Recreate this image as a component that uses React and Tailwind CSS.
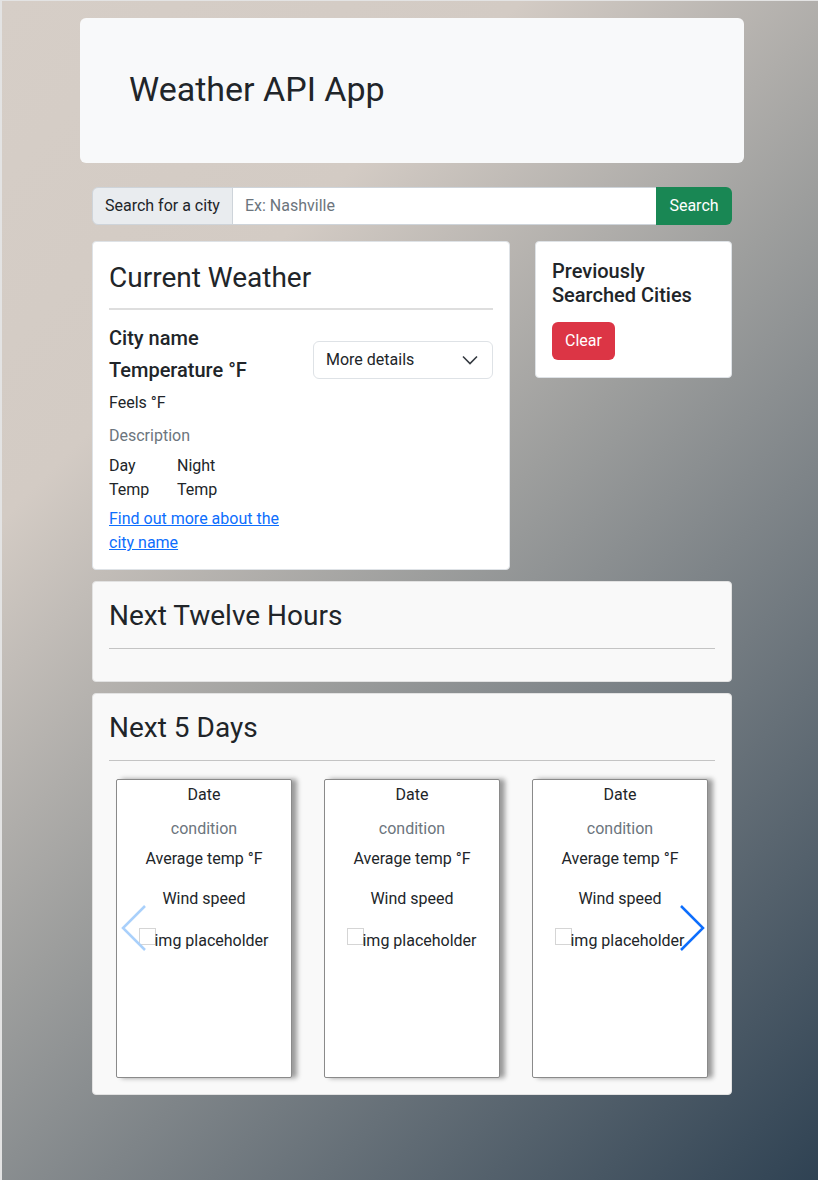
import React from "react";

// Weather dashboard: jumbotron, search bar, current weather, history, forecast carousel
const DayCard = () => (
  <div className="w-[176px] h-[299px] bg-white border border-[#8a8a8a] rounded-[2px] shadow-[5px_0_5px_#9a9a9a] flex flex-col items-center text-[16px] text-[#212529]">
    <p className="mt-[3px] leading-[24px]">Date</p>
    <p className="mt-[10px] leading-[24px] text-[#6c757d]">condition</p>
    <p className="mt-[6px] leading-[24px]">Average temp °F</p>
    <p className="mt-[16px] leading-[24px]">Wind speed</p>
    <p className="mt-[18px] leading-[24px] flex items-start">
      <span className="w-[17px] h-[17px] border border-[#d5d5d5] mt-[-1px] mr-[-2px]" />
      img placeholder
    </p>
  </div>
);

const Chevron = ({ dir, className }) => (
  <svg width="26" height="46" viewBox="0 0 26 46" className={className} fill="none" stroke="currentColor" strokeWidth="2.5">
    {dir === "left" ? <path d="M24 1 2 23l22 22" /> : <path d="M2 1l22 22L2 45" />}
  </svg>
);

export default function App() {
  return (
    <div
      className="min-h-[1180px] border-t border-l-2 border-[#e3e3e3] bg-[linear-gradient(135deg,#d6cec7_0%,#d3cbc4_26%,#9d9e9d_50%,#2f4253_100%)] pt-[17px] pb-[40px]"
      style={{ fontFamily: "Roboto, 'Liberation Sans', sans-serif" }}
    >
      <div className="w-[664px] ml-[78px]">
        <div className="bg-[#f8f9fa] rounded-[6px] h-[145px] flex items-center pl-[49px] pb-[4px]">
          <h1 className="text-[34px] text-[#212529] leading-none">Weather API App</h1>
        </div>

        <div className="px-[12px]">
          <div className="mt-[24px] flex h-[38px] text-[16px]">
            <span className="flex items-center px-[12px] bg-[#e9ecef] border border-[#ced4da] rounded-l-[6px] text-[#212529]">
              Search for a city
            </span>
            <input
              className="flex-1 px-[12px] bg-white border-y border-[#ced4da] outline-none placeholder:text-[#6c757d]"
              placeholder="Ex: Nashville"
            />
            <button className="w-[76px] bg-[#198754] text-white rounded-r-[6px]">Search</button>
          </div>

          <div className="mt-[16px] flex items-start gap-[25px]">
            <div className="w-[418px] h-[329px] bg-white border border-[#dee2e6] rounded-[4px] px-[16px] pt-[18px]">
              <h2 className="text-[28px] leading-[36px] text-[#212529]">Current Weather</h2>
              <hr className="mt-[12px] border-t-2 border-[#dedede]" />
              <div className="mt-[12px] flex justify-between">
                <div className="w-[180px] text-[16px] text-[#212529]">
                  <p className="text-[20px] font-medium leading-[32px]">City name</p>
                  <p className="text-[20px] font-medium leading-[32px]">Temperature °F</p>
                  <p className="mt-[1px] leading-[32px]">Feels °F</p>
                  <p className="leading-[34px] text-[#6c757d]">Description</p>
                  <div className="mt-[1px] flex leading-[24px]">
                    <div className="w-[68px]">
                      <p>Day</p>
                      <p>Temp</p>
                    </div>
                    <div>
                      <p>Night</p>
                      <p>Temp</p>
                    </div>
                  </div>
                  <a href="#" className="block mt-[5px] leading-[24px] text-[#0d6efd] underline">
                    Find out more about the city name
                  </a>
                </div>
                <div className="mt-[19px] w-[180px] h-[38px] border border-[#dee2e6] rounded-[6px] flex items-center justify-between pl-[12px] pr-[14px] text-[16px] text-[#212529]">
                  <span>More details</span>
                  <svg width="16" height="10" viewBox="0 0 16 10" fill="none" stroke="#343a40" strokeWidth="1.6">
                    <path d="M1 1.5l7 7 7-7" />
                  </svg>
                </div>
              </div>
            </div>

            <div className="flex-1 bg-white border border-[#dee2e6] rounded-[4px] px-[16px] pt-[17px] pb-[17px]">
              <h3 className="text-[20px] font-medium leading-[24px] text-[#212529]">Previously Searched Cities</h3>
              <button className="mt-[15px] h-[38px] px-[13px] bg-[#dc3545] text-white text-[16px] rounded-[6px]">
                Clear
              </button>
            </div>
          </div>

          <div className="mt-[11px] h-[101px] bg-[#f9f9f9] border border-[#e2e2e2] rounded-[4px] px-[16px] pt-[16px]">
            <h2 className="text-[28px] leading-[36px] text-[#212529]">Next Twelve Hours</h2>
            <hr className="mt-[14px] border-[#c4c4c4]" />
          </div>

          <div className="mt-[11px] bg-[#f9f9f9] border border-[#e2e2e2] rounded-[4px] px-[16px] pt-[16px] pb-[16px]">
            <h2 className="text-[28px] leading-[36px] text-[#212529]">Next 5 Days</h2>
            <hr className="mt-[14px] border-[#c4c4c4]" />
            <div className="relative mt-[18px] flex justify-center gap-[32px]">
              <DayCard />
              <DayCard />
              <DayCard />
              <Chevron dir="left" className="absolute left-[12px] top-[126px] text-[#a9d0fb]" />
              <Chevron dir="right" className="absolute right-[10px] top-[126px] text-[#0d6efd]" />
            </div>
          </div>
        </div>
      </div>
    </div>
  );
}
